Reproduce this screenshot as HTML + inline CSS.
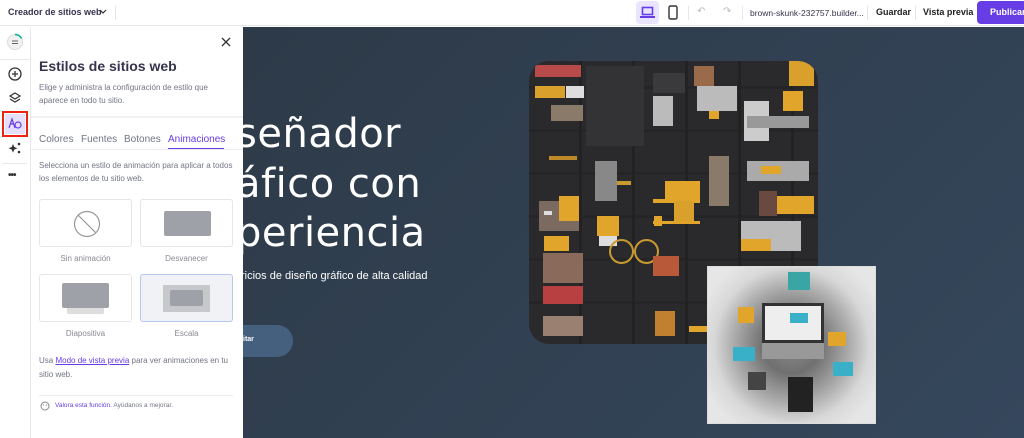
<!DOCTYPE html>
<html><head><meta charset="utf-8"><style>
*{margin:0;padding:0;box-sizing:border-box}
body{width:1024px;height:438px;overflow:hidden;font-family:"Liberation Sans",sans-serif;background:#fff;position:relative}
.top{position:absolute;left:0;top:0;width:1024px;height:26px;background:#fff;border-bottom:1px solid #e6e6ea}
.abs{position:absolute}
.canvas{position:absolute;left:243px;top:27px;width:781px;height:411px;background:linear-gradient(135deg,#2d3a48,#35475c)}
.rail{position:absolute;left:0;top:27px;width:31px;height:411px;background:#fff;border-right:1px solid #e8e8ec}
.panel{position:absolute;left:31px;top:27px;width:212px;height:411px;background:#fff}
.card{position:absolute;width:93px;height:48px;border:1px solid #e6e6ea;border-radius:3px;background:#fff}
.lbl{position:absolute;font-size:8px;color:#8a8a95;width:93px;text-align:center}
.big{position:absolute;color:#fff;font-family:"DejaVu Sans",sans-serif;font-size:40px;letter-spacing:0.5px}
.col div{position:absolute}
</style></head><body>
<div class="top">
 <div class="abs" style="left:8px;top:7px;font-size:9px;font-weight:bold;color:#36344d">Creador de sitios web</div>
 <svg class="abs" style="left:99px;top:9px" width="8" height="6"><path d="M1 1l3 3 3-3" stroke="#333" fill="none" stroke-width="1.2"/></svg>
 <div class="abs" style="left:115px;top:6px;width:1px;height:14px;background:#e6e6ea"></div>
 <div class="abs" style="left:636px;top:1px;width:23px;height:23px;background:#ebe4ff;border-radius:4px"></div>
 <svg class="abs" style="left:640px;top:6px" width="15" height="13"><rect x="2.5" y="1.5" width="10" height="7" fill="none" stroke="#673de6" stroke-width="1.6"/><rect x="0" y="10" width="15" height="2" fill="#673de6"/></svg>
 <svg class="abs" style="left:668px;top:5px" width="10" height="15"><rect x="1" y="1" width="8" height="13" rx="1.5" fill="none" stroke="#333" stroke-width="1.4"/></svg>
 <div class="abs" style="left:688px;top:6px;width:1px;height:14px;background:#e6e6ea"></div>
 <div class="abs" style="left:697px;top:6px;font-size:10px;color:#bbb">↶</div>
 <div class="abs" style="left:723px;top:6px;font-size:10px;color:#bbb">↷</div>
 <div class="abs" style="left:742px;top:6px;width:1px;height:14px;background:#e6e6ea"></div>
 <div class="abs" style="left:750px;top:8px;font-size:8.5px;color:#36344d">brown-skunk-232757.builder...</div>
 <div class="abs" style="left:867px;top:6px;width:1px;height:14px;background:#e6e6ea"></div>
 <div class="abs" style="left:876px;top:7px;font-size:9px;font-weight:bold;color:#1d1e20">Guardar</div>
 <div class="abs" style="left:915px;top:6px;width:1px;height:14px;background:#e6e6ea"></div>
 <div class="abs" style="left:923px;top:7px;font-size:9px;font-weight:bold;color:#1d1e20">Vista previa</div>
 <div class="abs" style="left:977px;top:1px;width:50px;height:23px;background:#673de6;border-radius:4px;color:#fff;font-size:9px;font-weight:bold;padding:6px 0 0 13px">Publicar</div>
</div>
<div class="canvas">
 <div class="big" style="left:-7px;top:84px">señador</div>
 <div class="big" style="left:-7px;top:134px">áfico con</div>
 <div class="big" style="left:-7px;top:183px">periencia</div>
 <div class="abs" style="left:-2px;top:243px;color:#fff;font-size:11px">ricios de diseño gráfico de alta calidad</div>
 <div class="abs" style="left:-20px;top:298px;width:70px;height:32px;background:#45607e;border-radius:16px;color:#fff;font-size:7px;font-weight:bold;padding:11px 0 0 20px">itar</div>
</div>
<div class="abs col" style="left:529px;top:61px;width:289px;height:283px;border-radius:20px;background:#2a2a2c;overflow:hidden">
 <div style="left:0;top:0;width:289px;height:283px;background:repeating-linear-gradient(90deg,transparent 0 50px,#222 50px 53px),repeating-linear-gradient(0deg,transparent 0 40px,#252527 40px 43px)"></div>
 <div style="left:6px;top:4px;width:46px;height:12px;background:#b84a4a"></div>
 <div style="left:6px;top:25px;width:30px;height:12px;background:#d9a02c"></div>
 <div style="left:37px;top:25px;width:18px;height:12px;background:#ddd"></div>
 <div style="left:22px;top:44px;width:32px;height:16px;background:#8a7a6a"></div>
 <div style="left:20px;top:95px;width:28px;height:4px;background:#c08a2a"></div>
 <div style="left:57px;top:5px;width:58px;height:80px;background:#333335"></div>
 <div style="left:82px;top:120px;width:20px;height:4px;background:#c89a30"></div>
 <div style="left:124px;top:12px;width:32px;height:20px;background:#3a3a3c"></div>
 <div style="left:124px;top:35px;width:20px;height:30px;background:#bbb"></div>
 <div style="left:124px;top:138px;width:47px;height:4px;background:#e0a52a"></div>
 <div style="left:124px;top:160px;width:47px;height:3px;background:#e0a52a"></div>
 <div style="left:66px;top:100px;width:22px;height:40px;background:#888"></div>
 <div style="left:68px;top:155px;width:22px;height:20px;background:#e0a52a"></div>
 <div style="left:70px;top:175px;width:18px;height:10px;background:#ddd"></div>
 <div style="left:10px;top:140px;width:40px;height:30px;background:#7a6a60"></div>
 <div style="left:30px;top:135px;width:20px;height:25px;background:#e0a52a"></div>
 <div style="left:136px;top:120px;width:35px;height:20px;background:#e0a52a"></div>
 <div style="left:145px;top:140px;width:20px;height:20px;background:#d9a02c"></div>
 <div style="left:165px;top:5px;width:20px;height:20px;background:#9a6a4a"></div>
 <div style="left:168px;top:25px;width:40px;height:25px;background:#bbb"></div>
 <div style="left:180px;top:50px;width:10px;height:8px;background:#e0a52a"></div>
 <div style="left:215px;top:40px;width:25px;height:40px;background:#ccc"></div>
 <div style="left:254px;top:30px;width:20px;height:20px;background:#e0a52a"></div>
 <div style="left:260px;top:0;width:25px;height:25px;background:#d9a02c"></div>
 <div style="left:218px;top:55px;width:62px;height:12px;background:#999"></div>
 <div style="left:218px;top:100px;width:62px;height:20px;background:#aaa"></div>
 <div style="left:232px;top:105px;width:20px;height:8px;background:#e0a52a"></div>
 <div style="left:15px;top:150px;width:8px;height:4px;background:#ddd"></div>
 <div style="left:15px;top:175px;width:25px;height:15px;background:#e0a52a"></div>
 <div style="left:180px;top:95px;width:20px;height:50px;background:#8a7a6a"></div>
 <div style="left:125px;top:155px;width:8px;height:10px;background:#e0a52a"></div>
 <div style="left:245px;top:135px;width:40px;height:18px;background:#e0a52a"></div>
 <div style="left:230px;top:130px;width:18px;height:25px;background:#6a4a40"></div>
 <div style="left:212px;top:160px;width:60px;height:30px;background:#bbb"></div>
 <div style="left:212px;top:178px;width:30px;height:12px;background:#e0a52a"></div>
 <div style="left:14px;top:192px;width:40px;height:30px;background:#8a6a5a"></div>
 <div style="left:14px;top:225px;width:40px;height:18px;background:#b84040"></div>
 <div style="left:80px;top:178px;width:25px;height:25px;border:2px solid #c89a30;border-radius:50%"></div>
 <div style="left:105px;top:178px;width:25px;height:25px;border:2px solid #c89a30;border-radius:50%"></div>
 <div style="left:124px;top:195px;width:26px;height:20px;background:#b85a3a"></div>
 <div style="left:14px;top:255px;width:40px;height:20px;background:#9a8070"></div>
 <div style="left:126px;top:250px;width:20px;height:25px;background:#c08030"></div>
 <div style="left:160px;top:265px;width:20px;height:6px;background:#e0a52a"></div>
</div>
<div class="abs" style="left:707px;top:266px;width:169px;height:158px;background:radial-gradient(circle at 50% 50%,#8a8a8a 0,#707070 25%,#aaa 50%,#d8d8d8 68%,#e6e6e6 85%);border:1px solid #ddd;overflow:hidden">
 <div class="abs" style="left:30px;top:40px;width:16px;height:16px;background:#e0a52a"></div>
 <div class="abs" style="left:80px;top:5px;width:22px;height:18px;background:#3aa5a5"></div>
 <div class="abs" style="left:120px;top:65px;width:18px;height:14px;background:#e0a52a"></div>
 <div class="abs" style="left:25px;top:80px;width:22px;height:14px;background:#3ab0c8"></div>
 <div class="abs" style="left:80px;top:110px;width:25px;height:35px;background:#222"></div>
 <div class="abs" style="left:40px;top:105px;width:18px;height:18px;background:#444"></div>
 <div class="abs" style="left:125px;top:95px;width:20px;height:14px;background:#3ab0c8"></div>
</div>
<div class="abs" style="left:762px;top:303px;width:62px;height:40px;background:#eee;border:3px solid #333"></div>
<div class="abs" style="left:790px;top:313px;width:18px;height:10px;background:#3ab0c8"></div>
<div class="abs" style="left:762px;top:343px;width:62px;height:16px;background:#999"></div>
<div class="rail">
 <svg class="abs" style="left:6px;top:6px" width="18" height="18"><circle cx="9" cy="9" r="7.5" fill="#f2f2f4" stroke="#ddd"/><path d="M9 1.5a7.5 7.5 0 0 1 6.5 4" stroke="#00b090" stroke-width="1.5" fill="none"/><path d="M6 8h6M6 10.5h6" stroke="#666" stroke-width="1"/></svg>
 <div class="abs" style="left:0;top:32px;width:31px;height:1px;background:#e8e8ec"></div>
 <svg class="abs" style="left:8px;top:40px" width="14" height="14"><circle cx="7" cy="7" r="6" fill="none" stroke="#333" stroke-width="1.3"/><path d="M7 4v6M4 7h6" stroke="#333" stroke-width="1.3"/></svg>
 <svg class="abs" style="left:8px;top:64px" width="14" height="14"><path d="M7 2l5 3-5 3-5-3z M2 8l5 3 5-3" fill="none" stroke="#333" stroke-width="1.2"/></svg>
 <div class="abs" style="left:2px;top:84px;width:26px;height:26px;border:2.5px solid #e21"></div>
 <div class="abs" style="left:5px;top:87px;width:20px;height:20px;background:#e6dffb"></div>
 <svg class="abs" style="left:8px;top:90px" width="14" height="14"><path d="M1 11l3-9 3 9M2.5 7h3" fill="none" stroke="#673de6" stroke-width="1.2"/><circle cx="10" cy="8" r="3" fill="none" stroke="#673de6" stroke-width="1.2"/></svg>
 <svg class="abs" style="left:8px;top:114px" width="14" height="14"><path d="M5 3l1.3 3 3 1.3-3 1.3L5 11.6 3.7 8.6.7 7.3l3-1.3z" fill="#333"/><circle cx="11" cy="3" r="1.3" fill="#333"/><circle cx="11" cy="11" r="1.3" fill="#333"/></svg>
 <div class="abs" style="left:2px;top:136px;width:25px;height:1px;background:#e8e8ec"></div>
 <div class="abs" style="left:8px;top:143px;font-size:10px;color:#333;font-weight:bold;letter-spacing:-1px">•••</div>
</div>
<div class="panel">
 <svg class="abs" style="left:190px;top:10px" width="10" height="10"><path d="M1 1l8 8M9 1l-8 8" stroke="#333" stroke-width="1.3"/></svg>
 <div class="abs" style="left:8px;top:31px;font-size:14px;font-weight:bold;color:#36344d">Estilos de sitios web</div>
 <div class="abs" style="left:8px;top:54px;width:200px;font-size:8px;line-height:13px;color:#727586">Elige y administra la configuración de estilo que aparece en todo tu sitio.</div>
 <div class="abs" style="left:0;top:89px;width:212px;height:2px;background:#f2f2f5"></div>
 <div class="abs" style="left:8px;top:107px;font-size:10px;color:#727586">Colores</div>
 <div class="abs" style="left:50px;top:107px;font-size:10px;color:#727586">Fuentes</div>
 <div class="abs" style="left:93px;top:107px;font-size:10px;color:#727586">Botones</div>
 <div class="abs" style="left:137px;top:107px;font-size:10px;color:#673de6">Animaciones</div>
 <div class="abs" style="left:137px;top:121px;width:56px;height:1.5px;background:#673de6"></div>
 <div class="abs" style="left:0;top:122px;width:212px;height:1px;background:#ececf0"></div>
 <div class="abs" style="left:8px;top:132px;width:200px;font-size:8px;line-height:13px;color:#727586">Selecciona un estilo de animación para aplicar a todos los elementos de tu sitio web.</div>
 <div class="card" style="left:8px;top:172px"><svg class="abs" style="left:33px;top:10px" width="28" height="28"><circle cx="14" cy="14" r="12.5" fill="none" stroke="#999" stroke-width="1.2"/><path d="M5 5l18 18" stroke="#999" stroke-width="1.2"/></svg></div>
 <div class="card" style="left:109px;top:172px"><div class="abs" style="left:23px;top:11px;width:47px;height:25px;background:#9ea1a7;border-radius:2px"></div></div>
 <div class="lbl" style="left:8px;top:227px">Sin animación</div>
 <div class="lbl" style="left:109px;top:227px">Desvanecer</div>
 <div class="card" style="left:8px;top:247px"><div class="abs" style="left:27px;top:26px;width:37px;height:13px;background:#ddd;border-radius:2px"></div><div class="abs" style="left:22px;top:8px;width:47px;height:25px;background:#9ea1a7;border-radius:2px"></div></div>
 <div class="card" style="left:109px;top:247px;background:#f0f2f6;border-color:#b8c6f0"><div class="abs" style="left:22px;top:10px;width:47px;height:27px;background:#c6c8cc"></div><div class="abs" style="left:29px;top:15px;width:33px;height:16px;background:#9ea1a7;border-radius:2px"></div></div>
 <div class="lbl" style="left:8px;top:302px">Diapositiva</div>
 <div class="lbl" style="left:109px;top:302px">Escala</div>
 <div class="abs" style="left:8px;top:327px;width:200px;font-size:8px;line-height:14px;color:#727586">Usa <span style="color:#673de6;text-decoration:underline">Modo de vista previa</span> para ver animaciones en tu sitio web.</div>
 <div class="abs" style="left:8px;top:368px;width:194px;height:1px;background:#ececf0"></div>
 <svg class="abs" style="left:9px;top:374px" width="10" height="10"><circle cx="5" cy="5" r="4" fill="none" stroke="#888"/><circle cx="3.5" cy="4" r=".6" fill="#888"/><circle cx="6.5" cy="4" r=".6" fill="#888"/></svg>
 <div class="abs" style="left:24px;top:375px;font-size:6.5px;color:#727586"><span style="color:#673de6">Valora esta función.</span> Ayúdanos a mejorar.</div>
</div>
</body></html>
